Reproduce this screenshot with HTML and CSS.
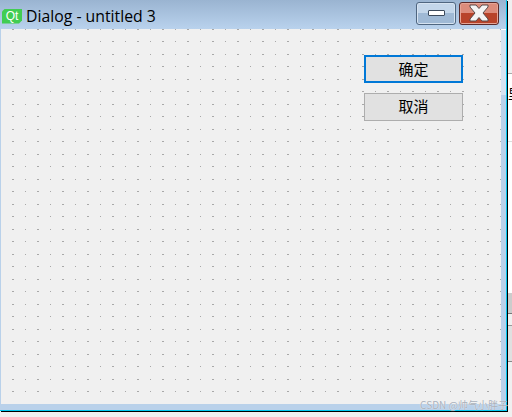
FILE: index.html
```html
<!DOCTYPE html>
<html lang="en">
<head>
    <meta charset="UTF-8">
    <title>Dialog - untitled 3</title>
    <link rel="stylesheet" href="styles.css">
</head>

<body>
    <div class="window">
        <div class="titlebar">
            <span class="qt-logo">Qt</span>
            <span class="title">Dialog - untitled 3</span>
            <div class="caption-buttons">
                <div class="caption-btn min">
                    <span class="min-glyph"></span>
                </div>
                <div class="caption-btn close">
                    <svg width="26" height="20" viewBox="0 0 26 20">
                        <path d="M4 2h6l3 3.5L16 2h6v2l-5 6 5 6v2h-6l-3-3.5L10 18H4v-2l5-6-5-6z" fill="#f4f4f4" stroke="#5a4a4a" stroke-width="1"/>
                    </svg>
                </div>
            </div>
        </div>
        <div class="main">
            <div class="canvas">
                <button class="btn btn-default">确定</button>
                <button class="btn">取消</button>
            </div>
            <div class="frame-right"></div>
        </div>
        <div class="frame-bottom"></div>
    </div>

    <!-- bits of whatever window sits behind the dialog -->
    <div class="behind">
        <div class="strip strip-top"></div>
        <div class="strip strip-glyph">里</div>
        <div class="strip strip-white"></div>
        <div class="strip strip-gray"></div>
        <div class="strip strip-light"></div>
        <div class="strip strip-mid"></div>
        <div class="strip strip-end"></div>
    </div>

    <div class="watermark">CSDN @帅气小胖子</div>
</body>
</html>
```

FILE: styles.css
```css
html,
body {
    height: 100%;
}

body {
    margin: 0;
    display: flex;
    align-items: flex-start;
    overflow: hidden;
    position: relative;
    background-color: #f0f0f0;
    font-family: "Noto Sans CJK SC", sans-serif;
}

.window {
    width: 506px;
    height: 410px;
    flex: none;
    display: flex;
    flex-direction: column;
    border-right: 1px solid #00c8f0;
    border-bottom: 1px solid #00c8f0;
    box-shadow: 1px 1px 0 #000;
    margin-right: 1px;
}

.titlebar {
    height: 29px;
    flex: none;
    display: flex;
    align-items: center;
    background: linear-gradient(#9ab4d1, #b9d2ed);
}

.qt-logo {
    width: 20px;
    height: 15px;
    margin-left: 2px;
    margin-top: 3px;
    background-color: #41cd52;
    color: #fff;
    font-family: "Liberation Sans", sans-serif;
    font-size: 12px;
    line-height: 15px;
    text-align: center;
    clip-path: polygon(3px 0, 100% 0, 100% 12px, 17px 100%, 0 100%, 0 3px);
}

.title {
    margin-left: 4px;
    margin-top: 3px;
    font-family: "Open Sans", sans-serif;
    font-size: 15.8px;
    color: #000;
}

.caption-buttons {
    margin-left: auto;
    margin-right: 7px;
    margin-top: -3px;
    display: flex;
    gap: 3px;
}

.caption-btn {
    width: 38px;
    height: 21px;
    border: 1px solid #4f6680;
    border-radius: 3px;
    display: flex;
    align-items: center;
    justify-content: center;
}

.min {
    background: linear-gradient(#c3d6ea 50%, #9fb9d5 50%);
    box-shadow: inset 0 0 0 1px #d6e3f1;
}

.min-glyph {
    width: 15px;
    height: 4px;
    background-color: #fff;
    border: 1px solid #3c4a5c;
    border-radius: 1px;
}

.close {
    background: linear-gradient(#dc8c7c 50%, #b8432a 50%);
    border-color: #5c2a2a;
    box-shadow: inset 0 0 0 1px #e5a597;
}

.main {
    flex: 1;
    display: flex;
    min-height: 0;
}

.canvas {
    flex: 1;
    display: flex;
    flex-direction: column;
    align-items: flex-end;
    gap: 10px;
    padding: 26px 38px 0 0;
    border-left: 1px solid #b9d1ea;
    background-color: #f0f0f0;
    /* designer grid: wide and narrow dots come from the 12.5px pitch */
    background-image:
        conic-gradient(at 2px 1px, transparent 75%, #a8a8a8 0),
        conic-gradient(at 1px 1px, transparent 75%, #a8a8a8 0),
        conic-gradient(at 2px 1px, transparent 75%, #a8a8a8 0),
        conic-gradient(at 1px 1px, transparent 75%, #a8a8a8 0);
    background-size: 25px 25px;
    background-position: 11px 0, 24px 0, 11px 12px, 24px 12px;
}

.btn {
    width: 99px;
    height: 28px;
    padding: 0 0 4px;
    background-color: #e1e1e1;
    border: 1px solid #adadad;
    font-family: "Noto Sans CJK SC", sans-serif;
    font-size: 15px;
    color: #000;
}

.btn-default {
    padding-bottom: 2px;
    border: 2px solid #0078d7;
}

.frame-right {
    width: 5px;
    flex: none;
    background: linear-gradient(#fff 1px, #d5e3f2 1px, #d5e3f2 66px, #b9d1ea 66px);
}

.frame-bottom {
    height: 6px;
    flex: none;
    background-color: #b9d1ea;
}

.behind {
    flex: 1;
    align-self: stretch;
    display: flex;
    flex-direction: column;
    overflow: hidden;
}

.strip {
    flex: none;
}

.strip-top {
    height: 73px;
    background-color: #f0f0f0;
    border-bottom: 1px solid #aaa;
}

.strip-glyph {
    height: 67px;
    background-color: #fff;
    border-bottom: 1px solid #ddd;
    font-size: 13px;
    line-height: 37px;
    color: #000;
}

.strip-white {
    height: 151px;
    background-color: #fff;
}

.strip-gray {
    height: 20px;
    background-color: #ccc;
    border-bottom: 1px solid #777;
}

.strip-light {
    height: 11px;
    background-color: #f0f0f0;
    border-bottom: 1px solid #999;
}

.strip-mid {
    height: 35px;
    background-color: #e0e0e0;
    border-bottom: 1px solid #888;
}

.strip-end {
    flex: 1;
    background-color: #f0f0f0;
}

.watermark {
    position: absolute;
    right: 4px;
    top: 398px;
    font-size: 10px;
    line-height: 14px;
    color: #a8b0ba;
    text-shadow: 0 0 1px #fff;
    white-space: nowrap;
}
```
